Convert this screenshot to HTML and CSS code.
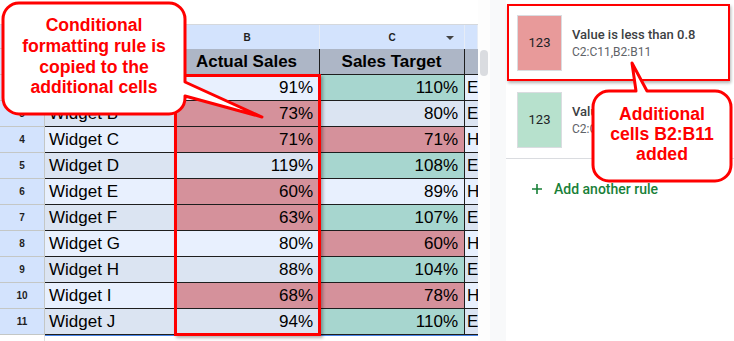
FILE: index.html
```html
<!DOCTYPE html>
<html lang="en">
<head>
    <meta charset="UTF-8">
    <meta name="viewport" content="width=device-width, initial-scale=1.0">
    <link rel="stylesheet" href="styles.css">
</head>
<body>
    <div class="screen">

        <!-- Spreadsheet -->
        <div class="sheet">
            <div class="toolbar"></div>

            <div class="row heads">
                <div class="num corner"></div>
                <div class="head col-a">A</div>
                <div class="head col-b">B</div>
                <div class="head col-c">C
                    <svg class="drop" width="8" height="4" viewBox="0 0 8 4"><path d="M0 0H8L4 4Z" fill="#444"/></svg>
                </div>
                <div class="head col-d"></div>
            </div>

            <div class="row titles">
                <div class="num">1</div>
                <div class="cell col-a">Product</div>
                <div class="cell col-b center">Actual Sales</div>
                <div class="cell col-c center">Sales Target</div>
                <div class="cell col-d"></div>
            </div>

            <div class="row">
                <div class="num">2</div>
                <div class="cell col-a">Widget A</div>
                <div class="cell col-b value">91%</div>
                <div class="cell col-c value good">110%</div>
                <div class="cell col-d">E</div>
            </div>
            <div class="row alt">
                <div class="num">3</div>
                <div class="cell col-a">Widget B</div>
                <div class="cell col-b value bad">73%</div>
                <div class="cell col-c value">80%</div>
                <div class="cell col-d">E</div>
            </div>
            <div class="row">
                <div class="num">4</div>
                <div class="cell col-a">Widget C</div>
                <div class="cell col-b value bad">71%</div>
                <div class="cell col-c value bad">71%</div>
                <div class="cell col-d">H</div>
            </div>
            <div class="row alt">
                <div class="num">5</div>
                <div class="cell col-a">Widget D</div>
                <div class="cell col-b value">119%</div>
                <div class="cell col-c value good">108%</div>
                <div class="cell col-d">E</div>
            </div>
            <div class="row">
                <div class="num">6</div>
                <div class="cell col-a">Widget E</div>
                <div class="cell col-b value bad">60%</div>
                <div class="cell col-c value">89%</div>
                <div class="cell col-d">H</div>
            </div>
            <div class="row alt">
                <div class="num">7</div>
                <div class="cell col-a">Widget F</div>
                <div class="cell col-b value bad">63%</div>
                <div class="cell col-c value good">107%</div>
                <div class="cell col-d">E</div>
            </div>
            <div class="row">
                <div class="num">8</div>
                <div class="cell col-a">Widget G</div>
                <div class="cell col-b value">80%</div>
                <div class="cell col-c value bad">60%</div>
                <div class="cell col-d">H</div>
            </div>
            <div class="row alt">
                <div class="num">9</div>
                <div class="cell col-a">Widget H</div>
                <div class="cell col-b value">88%</div>
                <div class="cell col-c value good">104%</div>
                <div class="cell col-d">E</div>
            </div>
            <div class="row">
                <div class="num">10</div>
                <div class="cell col-a">Widget I</div>
                <div class="cell col-b value bad">68%</div>
                <div class="cell col-c value bad">78%</div>
                <div class="cell col-d">H</div>
            </div>
            <div class="row alt">
                <div class="num">11</div>
                <div class="cell col-a">Widget J</div>
                <div class="cell col-b value">94%</div>
                <div class="cell col-c value good">110%</div>
                <div class="cell col-d">E</div>
            </div>

            <div class="row foot">
                <div class="num"></div>
                <div class="rest"></div>
            </div>

            <!-- red box around column B -->
            <div class="selection"></div>
        </div>

        <div class="scroll"><div class="thumb"></div></div>
        <div class="strip"></div>

        <!-- Conditional format rules panel -->
        <aside class="panel">
            <div class="rules">
                <div class="rule marked">
                    <div class="swatch red">123</div>
                    <div class="rule-text">
                        <div class="rule-title">Value is less than 0.8</div>
                        <div class="rule-range">C2:C11,B2:B11</div>
                    </div>
                </div>
                <div class="rule">
                    <div class="swatch green">123</div>
                    <div class="rule-text">
                        <div class="rule-title">Value is greater than 1</div>
                        <div class="rule-range">C2:C11</div>
                    </div>
                </div>
            </div>
            <div class="add">
                <svg width="10" height="10" viewBox="0 0 10 10"><path d="M5 0V10M0 5H10" stroke="#188038" stroke-width="1.6"/></svg>
                <span>Add another rule</span>
            </div>
        </aside>

        <!-- Annotations -->
        <svg class="callouts" width="734" height="341" viewBox="0 0 734 341">
            <path d="M19 3H169A16 16 0 0 1 185 19V82L262 117L185 96V98A16 16 0 0 1 169 114H19A16 16 0 0 1 3 98V19A16 16 0 0 1 19 3Z"
                  fill="#fff" stroke="#f00" stroke-width="3" stroke-linejoin="round"/>
            <path d="M609 91H636L632 63L647 91H715A16 16 0 0 1 731 107V165A16 16 0 0 1 715 181H609A16 16 0 0 1 593 165V107A16 16 0 0 1 609 91Z"
                  fill="#fff" stroke="#f00" stroke-width="3" stroke-linejoin="round"/>
        </svg>
        <div class="note note-left">Conditional<br>formatting rule is<br>copied to the<br>additional cells</div>
        <div class="note note-right">Additional<br>cells B2:B11<br>added</div>

    </div>
</body>
</html>
```

FILE: styles.css
```css
/* Reset */
* {
    margin: 0;
    padding: 0;
    box-sizing: border-box;
}

body {
    font-family: "Liberation Sans", Arial, sans-serif;
    background-color: #fff;
    color: #000;
    overflow: hidden;
}

.screen {
    position: relative;
    display: flex;
    width: 734px;
    height: 341px;
    overflow: hidden;
}

/* Sheet */
.sheet {
    position: relative;
    width: 478px;
    flex-shrink: 0;
}

.toolbar {
    height: 25px;
    border-bottom: 1px solid #d5d8dc;
}

.row {
    display: flex;
    height: 26px;
}

.row.heads {
    height: 24px;
}

.num {
    width: 45px;
    flex-shrink: 0;
    display: flex;
    align-items: center;
    justify-content: center;
    background-color: #d3e3fd;
    border-right: 1px solid #c4c7c5;
    border-bottom: 1px solid #c4c7c5;
    font-size: 10px;
    font-weight: bold;
    color: #1f1f1f;
}

.col-a { width: 130px; }
.col-b { width: 145px; }
.col-c { width: 145px; }
.col-d { width: 13px; }

.head {
    position: relative;
    flex-shrink: 0;
    display: flex;
    align-items: center;
    justify-content: center;
    background-color: #d3e3fd;
    border-right: 1px solid #e6ecf6;
    font-size: 10px;
    font-weight: bold;
    color: #1f1f1f;
}

.head .drop {
    position: absolute;
    right: 10px;
    top: 11px;
}

.cell {
    flex-shrink: 0;
    display: flex;
    align-items: center;
    padding: 0 5px 0 4px;
    background-color: #e8f0fe;
    border-right: 1px solid #1e1e1e;
    border-bottom: 1px solid #1e1e1e;
    font-size: 17px;
    white-space: nowrap;
    overflow: hidden;
}

.row.alt .cell {
    background-color: #dbe4f2;
}

.titles .cell {
    background-color: #adb6c6;
    font-weight: bold;
}

.cell.center {
    justify-content: center;
}

.cell.value {
    justify-content: flex-end;
    padding-right: 6px;
}

.cell.col-d {
    padding: 0 0 0 2px;
    border-right: none;
}

.row .cell.bad {
    background-color: #d5919b;
}

.row .cell.good {
    background-color: #a7d6cf;
}

.foot {
    height: 6px;
}

.foot .num {
    background-color: #fff;
    border-bottom: none;
    border-right: 1px solid #e0e0e0;
}

.foot .rest {
    flex: 1;
    border-top: 1px solid #4a86e8;
}

.selection {
    position: absolute;
    left: 174px;
    top: 74px;
    width: 147px;
    height: 262px;
    border: 3px solid #f00;
    box-shadow: 2px 2px 3px rgba(0, 0, 0, 0.3);
}

/* Scroll + gutter */
.scroll {
    width: 12px;
    flex-shrink: 0;
    padding: 50px 0 0 2px;
    background-color: #fdfdfd;
}

.thumb {
    width: 8px;
    height: 26px;
    border-radius: 4px;
    background-color: #dadce0;
}

.strip {
    width: 16px;
    flex-shrink: 0;
    background-color: #f8f9fa;
}

/* Rules panel */
.panel {
    width: 228px;
    flex-shrink: 0;
    padding-top: 4px;
    background-color: #fff;
    font-family: Roboto, "Liberation Sans", sans-serif;
}

.rules {
    border-bottom: 1px solid #dadce0;
}

.rule {
    display: flex;
    align-items: center;
    gap: 10px;
    height: 77px;
    margin: 0 4px 0 1px;
    padding-left: 10px;
}

.rule.marked {
    border: 2px solid #f00;
    padding-left: 8px;
    box-shadow: 1px 2px 3px rgba(0, 0, 0, 0.3);
}

.swatch {
    width: 45px;
    height: 56px;
    flex-shrink: 0;
    display: flex;
    align-items: center;
    justify-content: center;
    border: 1px solid #dadce0;
    font-size: 13px;
    color: #202124;
}

.swatch.red {
    background-color: #e89a9a;
}

.swatch.green {
    background-color: #b7e1cd;
}

.rule-text {
    white-space: nowrap;
}

.rule-title {
    font-size: 13px;
    font-weight: 500;
    color: #3c4043;
    margin-bottom: 3px;
}

.rule-range {
    font-size: 12px;
    color: #5f6368;
}

.add {
    display: flex;
    align-items: center;
    gap: 12px;
    padding: 22px 0 0 26px;
    font-size: 14px;
    font-weight: 500;
    color: #188038;
}

/* Callouts */
.callouts {
    position: absolute;
    left: 0;
    top: 0;
}

.note {
    position: absolute;
    text-align: center;
    color: #f00;
    font-size: 17.6px;
    font-weight: bold;
    line-height: 20.8px;
}

.note-left {
    left: 3px;
    top: 15px;
    width: 182px;
}

.note-right {
    left: 593px;
    top: 104px;
    width: 138px;
    line-height: 20px;
}
```
